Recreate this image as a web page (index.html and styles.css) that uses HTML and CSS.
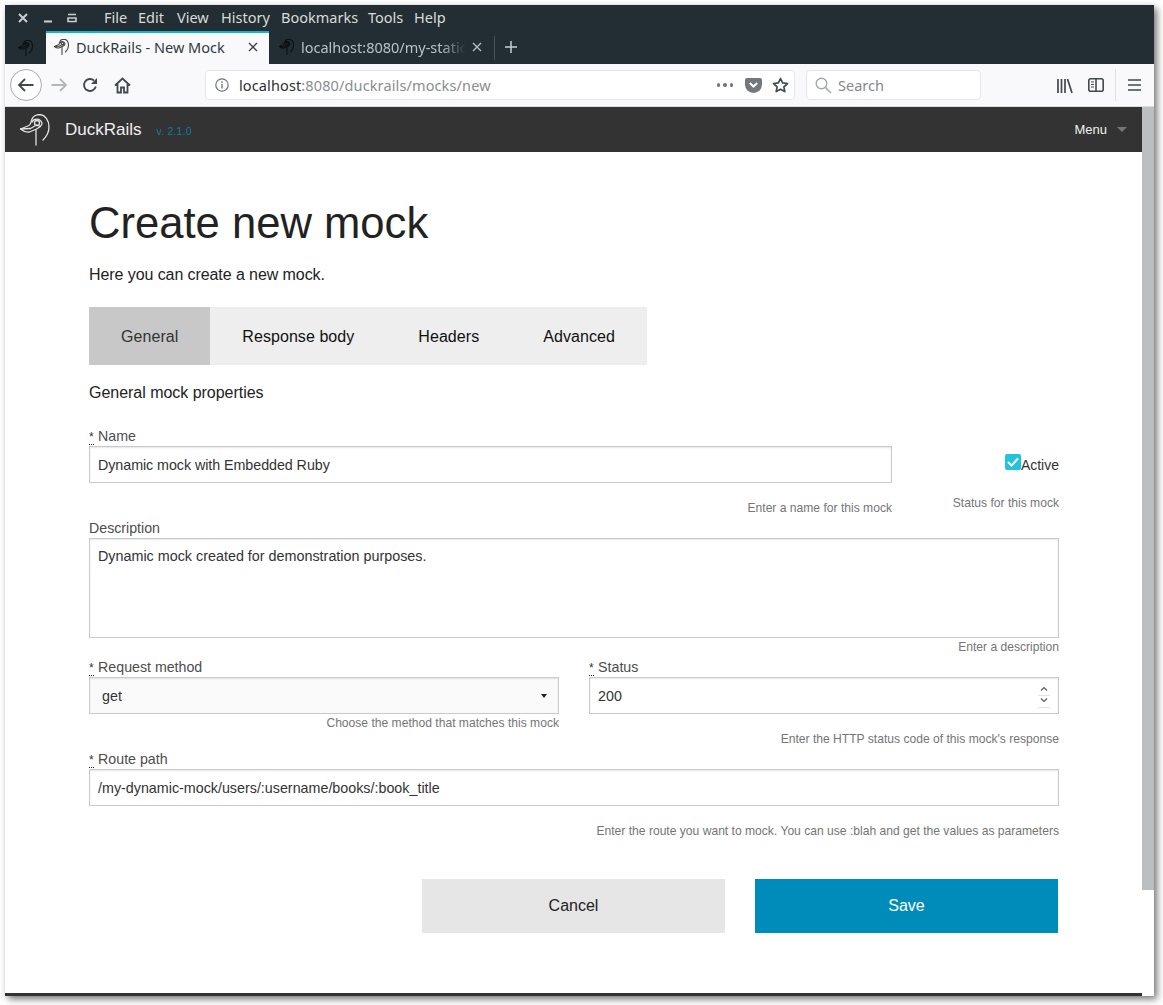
FILE: index.html
```html
<!DOCTYPE html>
<html lang="en">
<head>
<meta charset="utf-8">
<title>DuckRails - New Mock</title>
<link rel="stylesheet" href="styles.css">
</head>
<body>
<svg class="defs" width="0" height="0">
	<symbol id="duck" viewBox="0 0 32 32">
		<g fill="none" stroke="currentColor" stroke-linecap="round" stroke-linejoin="round">
			<path d="M.5 15L9 11.500C11 10 11 8 12 5c1-3 5-4.500 8-4.500 5 .5 9 5.500 9 12.500 0 5-3 10-6 13"/>
			<path d="M.5 15c3 2.500 6 3.500 9 3l7-3 4-2.500-4-1.500-6 3.500L.5 15"/>
			<path d="M16 16v15"/>
			<circle cx="17" cy="9" r="2.500"/>
			<path d="M12 8c2-4 8-4 10 1 0 2-1 3-2 3.500"/>
		</g>
	</symbol>
</svg>

<div class="window">
	<!-- browser chrome -->
	<div class="menubar">
		<div class="winbtns">
			<svg width="10" height="10" viewBox="0 0 10 10"><path d="M1 1l8 8M9 1l-8 8" stroke="#c9ced1" stroke-width="2"/></svg>
			<svg width="10" height="10" viewBox="0 0 10 10"><path d="M1 8.500h8" stroke="#c9ced1" stroke-width="2"/></svg>
			<svg width="10" height="10" viewBox="0 0 10 10"><path d="M1 1.500h8M1 5h8v3.500H1z" fill="none" stroke="#c9ced1" stroke-width="1.600"/></svg>
		</div>
		<nav class="menus">
			<span>File</span><span>Edit</span><span>View</span><span>History</span><span>Bookmarks</span><span>Tools</span><span>Help</span>
		</nav>
	</div>

	<div class="tabbar">
		<div class="pinned"><svg class="favicon dark" width="16" height="16"><use href="#duck"/></svg></div>
		<div class="tab active">
			<svg class="favicon" width="16" height="16"><use href="#duck"/></svg>
			<span class="tab-title">DuckRails - New Mock</span>
			<svg class="tab-close" width="10" height="10" viewBox="0 0 10 10"><path d="M1 1l8 8M9 1l-8 8" stroke="#3a4348" stroke-width="1.400"/></svg>
		</div>
		<div class="tab">
			<svg class="favicon dark" width="16" height="16"><use href="#duck"/></svg>
			<span class="tab-title fade">localhost:8080/my-static</span>
			<svg class="tab-close" width="10" height="10" viewBox="0 0 10 10"><path d="M1 1l8 8M9 1l-8 8" stroke="#b5bcc0" stroke-width="1.400"/></svg>
		</div>
		<div class="tab-sep"></div>
		<svg class="newtab" width="14" height="14" viewBox="0 0 14 14"><path d="M7 1v12M1 7h12" stroke="#c9ced1" stroke-width="1.500"/></svg>
	</div>

	<div class="toolbar">
		<div class="backbtn">
			<svg width="18" height="16" viewBox="0 0 18 16"><path d="M16.500 8H2M8 2L2 8l6 6" fill="none" stroke="#40494e" stroke-width="1.800"/></svg>
		</div>
		<svg class="tool-forward" width="18" height="16" viewBox="0 0 18 16"><path d="M1.500 8H16M10 2l6 6-6 6" fill="none" stroke="#b4b7ba" stroke-width="1.800"/></svg>
		<svg class="tool-reload" width="16" height="16" viewBox="0 0 16 16"><path d="M13.800 9.500A6 6 0 1 1 12 3.500" fill="none" stroke="#40494e" stroke-width="1.900"/><path d="M15 1v6H9z" fill="#40494e"/></svg>
		<svg class="tool-home" width="17" height="17" viewBox="0 0 17 17"><path d="M1 8.500L8.500 1.500 16 8.500M3.500 7v8.500h3.500v-5h3v5h3.500V7" fill="none" stroke="#40494e" stroke-width="1.800"/></svg>
		<div class="urlbar">
			<svg width="14" height="14" viewBox="0 0 14 14"><circle cx="7" cy="7" r="6.200" fill="none" stroke="#6f767a" stroke-width="1.200"/><path d="M7 6v4.500M7 3.200v1.500" stroke="#6f767a" stroke-width="1.400"/></svg>
			<span class="url"><b>localhost</b>:8080/duckrails/mocks/new</span>
			<span class="dots"><i></i><i></i><i></i></span>
			<svg width="17" height="15" viewBox="0 0 17 15"><path d="M2 0h13a2 2 0 0 1 2 2v4.500a8.500 8.500 0 0 1-17 0V2a2 2 0 0 1 2-2z" fill="#73787c"/><path d="M4.800 5l3.700 3.500L12.200 5" fill="none" stroke="#fff" stroke-width="2"/></svg>
			<svg width="17" height="16" viewBox="0 0 17 16"><path d="M8.500 1.500l2.100 4.400 4.900.6-3.600 3.300.9 4.800-4.300-2.400-4.300 2.400.9-4.800L1.500 6.500l4.900-.6z" fill="none" stroke="#40494e" stroke-width="1.700" stroke-linejoin="round"/></svg>
		</div>
		<div class="searchbar">
			<svg width="17" height="17" viewBox="0 0 17 17"><circle cx="6.500" cy="6.500" r="5.300" fill="none" stroke="#a3a6a9" stroke-width="1.400"/><path d="M10.500 10.500l5.500 5.500" stroke="#a3a6a9" stroke-width="1.600"/></svg>
			<span>Search</span>
		</div>
		<svg class="tool-library" width="16" height="15" viewBox="0 0 16 15"><path d="M1 1v14M4.500 1v14M8 1v14M10.500 1l4.500 14" stroke="#40494e" stroke-width="1.700" fill="none"/></svg>
		<svg class="tool-sidebar" width="16" height="14" viewBox="0 0 16 14"><rect x=".8" y=".8" width="14.400" height="12.400" rx="2" fill="none" stroke="#40494e" stroke-width="1.600"/><path d="M8 1v12" stroke="#40494e" stroke-width="1.600"/><path d="M3 4h3M3 6.500h3M3 9h3" stroke="#40494e" stroke-width="1.200"/></svg>
		<div class="tool-sep"></div>
		<svg class="tool-menu" width="13" height="12" viewBox="0 0 13 12"><path d="M0 1h13M0 6h13M0 11h13" stroke="#40494e" stroke-width="1.700"/></svg>
	</div>

	<!-- page -->
	<div class="viewport">
		<div class="page">
			<header class="topbar">
				<svg class="logo" width="32" height="32"><use href="#duck"/></svg>
				<span class="brand">DuckRails</span>
				<span class="version">v. 2.1.0</span>
				<span class="menu-link">Menu</span>
				<span class="menu-caret"></span>
			</header>

			<main class="content">
				<h1>Create new mock</h1>
				<p class="lead">Here you can create a new mock.</p>

				<ul class="tabs">
					<li class="is-active">General</li>
					<li>Response body</li>
					<li>Headers</li>
					<li>Advanced</li>
				</ul>

				<h2 class="section-title">General mock properties</h2>

				<form class="form">
					<div class="row row-name">
						<div class="field">
							<label class="label" for="name"><abbr>*</abbr> Name</label>
							<input class="input input-name" id="name" type="text" value="Dynamic mock with Embedded Ruby">
							<p class="help help-name">Enter a name for this mock</p>
						</div>
						<div class="field-active">
							<div class="check-line">
								<span class="check"><svg width="16" height="16" viewBox="0 0 16 16"><path d="M3 8l3.500 3.500L13 4.500" fill="none" stroke="#fff" stroke-width="2"/></svg></span>
								<span class="check-label">Active</span>
							</div>
							<p class="help help-active">Status for this mock</p>
						</div>
					</div>

					<div class="field">
						<label class="label" for="description">Description</label>
						<textarea class="input textarea" id="description">Dynamic mock created for demonstration purposes.</textarea>
						<p class="help help-desc">Enter a description</p>
					</div>

					<div class="row row-two">
						<div class="field">
							<label class="label" for="method"><abbr>*</abbr> Request method</label>
							<div class="select-wrap">
								<select class="input select" id="method"><option>get</option></select>
								<span class="select-caret"></span>
							</div>
							<p class="help help-method">Choose the method that matches this mock</p>
						</div>
						<div class="field">
							<label class="label" for="status"><abbr>*</abbr> Status</label>
							<div class="number-wrap">
								<input class="input" id="status" type="text" value="200">
								<svg class="spinner" width="12" height="24" viewBox="0 0 12 24"><path d="M3 6.500l3-3 3 3M3 14.500l3 3 3-3" fill="none" stroke="#555" stroke-width="1.100"/><path d="M0 11.500h12M0 23.500h12" stroke="#e4e4e4"/></svg>
							</div>
							<p class="help help-status">Enter the HTTP status code of this mock's response</p>
						</div>
					</div>

					<div class="field">
						<label class="label" for="route"><abbr>*</abbr> Route path</label>
						<input class="input" id="route" type="text" value="/my-dynamic-mock/users/:username/books/:book_title">
						<p class="help help-route">Enter the route you want to mock. You can use :blah and get the values as parameters</p>
					</div>

					<div class="actions">
						<a class="button button-cancel">Cancel</a>
						<a class="button button-save">Save</a>
					</div>
				</form>
			</main>

			<div class="footer-bar"></div>
		</div>
		<div class="scrollbar"><div class="thumb"></div></div>
	</div>
</div>
</body>
</html>
```

FILE: styles.css
```css
* { box-sizing: border-box; }
html, body { margin: 0; height: 100%; background: #fff; overflow: hidden; }
body { padding: 5px 0 0 5px; font-family: "Liberation Sans", Arial, sans-serif; }
.defs { display: block; height: 0; }

.window { width: 1149px; height: 991px; display: flex; flex-direction: column; background: #fff; box-shadow: 3px 3px 7px rgba(0,0,0,.55); }

/* browser chrome */
.menubar { height: 26px; padding-bottom: 2px; background: #232e34; display: flex; align-items: center; font-family: "Noto Sans", sans-serif; font-size: 14.500px; color: #d8dcd8; }
.winbtns { display: flex; gap: 14.500px; padding: 2px 0 0 13px; width: 99px; }
.menus { display: grid; grid-template-columns: 34px 39px 44px 60px 87px 46px auto; }

.tabbar { height: 33px; background: #232e34; display: flex; font-family: "Noto Sans", sans-serif; font-size: 14.500px; }
.pinned { width: 41px; display: flex; align-items: center; padding-left: 13px; }
.favicon { color: #ccc; stroke-width: 2.200; flex: none; }
.favicon.dark { color: #0b0f11; }
.tab { display: flex; align-items: center; gap: 6px; padding: 0 0 2px 8px; width: 223px; color: #b9c1c5; }
.tab.active { background: #f9f9fb; border-top: 2px solid #0ab9d0; color: #2f3a40; padding-bottom: 3px; }
.tab.active .favicon { color: #444; }
.tab-title { flex: 1; white-space: nowrap; overflow: hidden; }
.tab-title.fade { -webkit-mask-image: linear-gradient(90deg, #000 85%, transparent); mask-image: linear-gradient(90deg, #000 85%, transparent); }
.tab-close { margin-right: 11px; flex: none; }
.tab:not(.active) { width: 224px; padding-left: 10px; gap: 6px; }
.tab-sep { width: 1px; height: 24px; margin: 5px 0 0 1px; background: #4a555b; }
.newtab { margin: 9px 0 0 9px; }

.toolbar { height: 43px; background: #f9f9fb; border-bottom: 1px solid #dcdcde; display: flex; align-items: center; padding-left: 5px; }
.backbtn { width: 32px; height: 32px; border: 1px solid #a9abad; border-radius: 50%; background: #fff; display: flex; align-items: center; justify-content: center; flex: none; }
.tool-forward { margin-left: 8px; flex: none; }
.tool-reload { margin-left: 14px; flex: none; }
.tool-home { margin-left: 16px; flex: none; }
.urlbar { width: 590px; height: 30px; margin-left: 74px; background: #fff; border: 1px solid #e6e6e8; border-radius: 4px; display: flex; align-items: center; padding: 0 5px 0 9px; flex: none; }
.url { flex: 1; margin-left: 10px; font-family: "Noto Sans", sans-serif; font-size: 14.500px; letter-spacing: .12px; color: #8a8d90; white-space: nowrap; }
.url b { font-weight: 400; color: #2a2e31; }
.dots { display: flex; gap: 3px; margin-right: 12px; }
.dots i { width: 3.500px; height: 3.500px; border-radius: 50%; background: #73787c; }
.urlbar svg:last-child { margin-left: 10px; }
.searchbar { width: 175px; height: 30px; margin-left: 11px; background: #fff; border: 1px solid #e6e6e8; border-radius: 4px; display: flex; align-items: center; gap: 6px; padding-left: 8px; font-family: "Noto Sans", sans-serif; font-size: 14.500px; color: #84898d; flex: none; }
.tool-library { margin-left: 76px; flex: none; }
.tool-sidebar { margin-left: 15px; flex: none; }
.tool-sep { width: 1px; height: 32px; margin-left: 11px; background: #dfe0e1; flex: none; }
.tool-menu { margin-left: 12px; flex: none; }

/* page area */
.viewport { flex: 1; display: flex; min-height: 0; }
.page { flex: 1; display: flex; flex-direction: column; min-width: 0; }
.scrollbar { width: 12px; background: #fff; }
.thumb { height: 783px; background: #bcbfc2; }

.topbar { height: 45px; background: #333; display: flex; align-items: center; padding-left: 15px; flex: none; }
.logo { color: #e4e4e4; stroke-width: 1.300; flex: none; }
.brand { margin-left: 13px; font-size: 17px; color: #f0f0f0; }
.version { margin-left: 15px; margin-top: 3px; font-size: 10.500px; letter-spacing: .2px; color: #0a7ba6; }
.menu-link { margin-left: auto; font-size: 13px; color: #f0f0f0; }
.menu-caret { margin: 0 15px 0 10px; border: 5px solid transparent; border-top-color: #777; border-bottom-width: 0; }

.content { flex: 1; padding: 44px 83px 0 84px; color: #222; }
h1 { margin: 0; font-size: 43.600px; line-height: 54px; font-weight: 400; color: #222; }
.lead { margin: 14px 0 0; font-size: 16px; line-height: 22px; letter-spacing: -.08px; }
.tabs { display: flex; width: 558px; height: 58px; margin: 21px 0 0; padding: 0; list-style: none; background: #eee; font-size: 16px; letter-spacing: .06px; color: #111; }
.tabs li { display: flex; align-items: center; padding: 1px 32px 0; }
.tabs li.is-active { background: #c8c8c8; color: #333; }
.section-title { margin: 17px 0 0; font-size: 16px; line-height: 22px; font-weight: 400; color: #222; letter-spacing: -.03px; }

.form { margin-top: 24px; }
.label { display: block; height: 16px; font-size: 14.200px; line-height: 16px; color: #4d4d4d; margin-bottom: 2px; }
.label abbr { border-bottom: 1px dotted #222; color: #333; font-size: 12px; margin-right: .5px; }
.input { display: block; width: 100%; height: 37px; padding: 0 8px; border: 1px solid #cacaca; border-radius: 0; background: #fff; box-shadow: inset 0 1px 2px rgba(0,0,0,.1); font-family: inherit; font-size: 14.300px; color: #333; outline: 0; }
.input-name { letter-spacing: -.06px; }
.textarea { height: 100px; padding: 8px; resize: none; line-height: 18px; font-size: 14.350px; }
.help { margin: 0; font-size: 12.100px; line-height: 14px; color: #757575; text-align: right; }

.row { display: flex; }
.row-name { height: 92px; }
.row-name .field { width: 803px; flex: none; }
.help-name { margin-top: 18px; }
.field-active { flex: 1; margin-top: 26px; }
.check-line { display: flex; justify-content: flex-end; align-items: flex-start; height: 42px; }
.check { width: 16px; height: 16px; background: #22c4dc; border-radius: 2px; display: block; }
.check svg { display: block; }
.check-label { font-size: 14px; line-height: 16px; margin-top: 3px; color: #333; }
.help-active { margin-top: 0; }

.help-desc { margin-top: 2px; }
.row-two { gap: 30px; margin-top: 5px; height: 92px; }
.row-two .field { flex: 1; min-width: 0; }
.select-wrap, .number-wrap { position: relative; }
.select { appearance: none; -webkit-appearance: none; background: #fafafa; padding-left: 12px; }
.select-caret { position: absolute; right: 12px; top: 17px; border: 3px solid transparent; border-top: 4px solid #222; border-bottom-width: 0; }
.spinner { position: absolute; right: 9px; top: 7px; }
.help-method { margin-top: 2px; }
.help-status { margin-top: 18px; }

.help-route { margin-top: 18px; }
.actions { display: flex; gap: 30px; justify-content: flex-end; padding-right: 1px; margin-top: 41px; }
.button { width: 303px; height: 54px; display: flex; align-items: center; justify-content: center; font-size: 16px; }
.button-cancel { background: #e6e6e6; color: #222; }
.button-save { background: #008cba; color: #fff; }

.footer-bar { height: 3px; background: #333; flex: none; }
```
